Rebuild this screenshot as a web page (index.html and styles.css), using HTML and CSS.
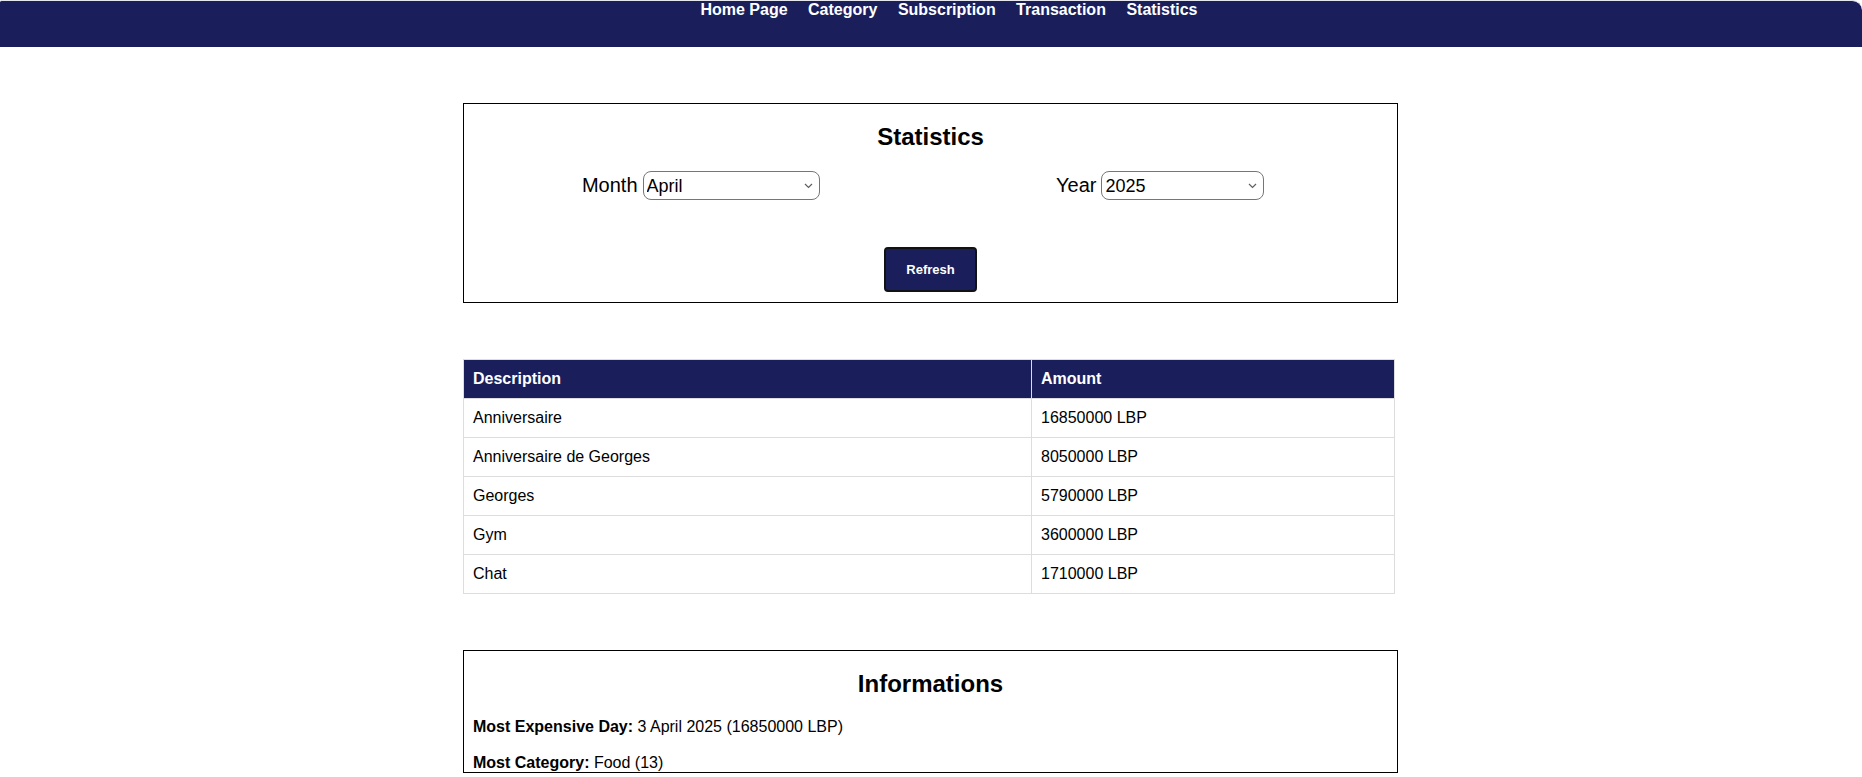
FILE: index.html
```html
<!DOCTYPE html>
<html lang="en">
<head>
<meta charset="utf-8">
<title>Statistics</title>
<link rel="stylesheet" href="styles.css">
</head>
<body>
<nav class="topnav">
  <ul class="nav-list">
    <li><a href="#">Home Page</a></li>
    <li><a href="#">Category</a></li>
    <li><a href="#">Subscription</a></li>
    <li><a href="#">Transaction</a></li>
    <li><a href="#">Statistics</a></li>
  </ul>
</nav>

<main class="page">
  <section class="box stats">
    <h2 class="box-title">Statistics</h2>
    <div class="filters">
      <div class="filter">
        <label class="filter-label" for="month">Month</label>
        <span class="select-wrap">
          <select id="month" class="select select-month">
            <option>January</option><option>February</option><option>March</option>
            <option selected>April</option><option>May</option><option>June</option>
            <option>July</option><option>August</option><option>September</option>
            <option>October</option><option>November</option><option>December</option>
          </select>
          <svg class="chevron" width="9" height="6" viewBox="0 0 9 6"><path d="M1 1l3.5 3.5L8 1" fill="none" stroke="#5f5f5f" stroke-width="1.2"/></svg>
        </span>
      </div>
      <div class="filter">
        <label class="filter-label" for="year">Year</label>
        <span class="select-wrap">
          <select id="year" class="select select-year">
            <option>2024</option><option selected>2025</option><option>2026</option>
          </select>
          <svg class="chevron" width="9" height="6" viewBox="0 0 9 6"><path d="M1 1l3.5 3.5L8 1" fill="none" stroke="#5f5f5f" stroke-width="1.2"/></svg>
        </span>
      </div>
    </div>
    <div class="actions">
      <button class="btn">Refresh</button>
    </div>
  </section>

  <table class="data-table">
    <thead>
      <tr><th class="col-desc">Description</th><th>Amount</th></tr>
    </thead>
    <tbody>
      <tr><td>Anniversaire</td><td>16850000 LBP</td></tr>
      <tr><td>Anniversaire de Georges</td><td>8050000 LBP</td></tr>
      <tr><td>Georges</td><td>5790000 LBP</td></tr>
      <tr><td>Gym</td><td>3600000 LBP</td></tr>
      <tr><td>Chat</td><td>1710000 LBP</td></tr>
    </tbody>
  </table>

  <section class="box info">
    <h2 class="box-title">Informations</h2>
    <p class="info-line"><strong>Most Expensive Day:</strong> 3 April 2025 (16850000 LBP)</p>
    <p class="info-line"><strong>Most Category:</strong> Food (13)</p>
  </section>
</main>
</body>
</html>
```

FILE: styles.css
```css
* { box-sizing: border-box; }

html, body {
  margin: 0;
  padding: 0;
  background: #ffffff;
  font-family: "Liberation Sans", Arial, sans-serif;
  color: #000;
}

.topnav {
  background: #1a1f5c;
  height: 47px;
  border-top: 1px solid #e6e7ee;
  border-radius: 2px 10px 0 0;
}

.nav-list {
  list-style: none;
  margin: 0;
  padding: 0 0 0 36px;
  text-align: center;
  line-height: 18px;
}

.nav-list li {
  display: inline-block;
  margin: 0 8px;
}

.nav-list a {
  color: #ffffff;
  text-decoration: none;
  font-weight: bold;
  font-size: 16px;
}

.page {
  width: 935px;
  margin: 56px 0 0 calc(50% - 468px);
  display: flex;
  flex-direction: column;
  align-items: flex-start;
  gap: 56px;
}

.box {
  width: 935px;
  border: 1px solid #000;
  padding: 0 9px 10px;
}

.box-title {
  font-size: 24px;
  font-weight: bold;
  text-align: center;
  margin: 19px 0 20px;
  line-height: 28px;
}

.filters {
  display: grid;
  grid-template-columns: 1fr 1fr;
}

.filter {
  display: flex;
  align-items: center;
  justify-content: center;
  gap: 5px;
  font-size: 20px;
}

.filter:first-child { margin-right: 2px; }
.filter:last-child { margin-left: 2px; }

.filter-label {
  font-size: 20px;
}

.select-wrap {
  position: relative;
  display: inline-flex;
}

.select {
  -webkit-appearance: none;
  appearance: none;
  font-family: "Liberation Sans", Arial, sans-serif;
  font-size: 18px;
  height: 29px;
  border: 1px solid #767676;
  border-radius: 8px;
  background: #fff;
  color: #000;
  padding: 0 20px 0 3px;
}

.chevron {
  position: absolute;
  right: 7px;
  top: 12px;
  pointer-events: none;
}

.select-month { width: 177px; }
.select-year { width: 163px; }

.actions {
  display: flex;
  justify-content: center;
  margin-top: 47px;
}

.btn {
  background: #1a1f5c;
  color: #fff;
  font-family: "Liberation Sans", Arial, sans-serif;
  font-weight: bold;
  font-size: 13px;
  line-height: 15px;
  padding: 13px 20px;
  border: 2px solid #121212;
  border-radius: 4px;
  cursor: pointer;
}

.data-table {
  width: 932px;
  border-collapse: collapse;
  font-size: 16px;
}

.data-table th,
.data-table td {
  text-align: left;
  padding: 10px 9px;
  line-height: 18px;
  border: 1px solid #dddddd;
}

.data-table th {
  background: #1a1f5c;
  color: #fff;
  font-weight: bold;
}

.data-table .col-desc { width: 568px; }

.info {
  padding-bottom: 0;
}

.info-line {
  font-size: 16px;
  line-height: 18px;
  margin: 18px 0;
}

.info-line:last-child { margin-bottom: 0; }
```
